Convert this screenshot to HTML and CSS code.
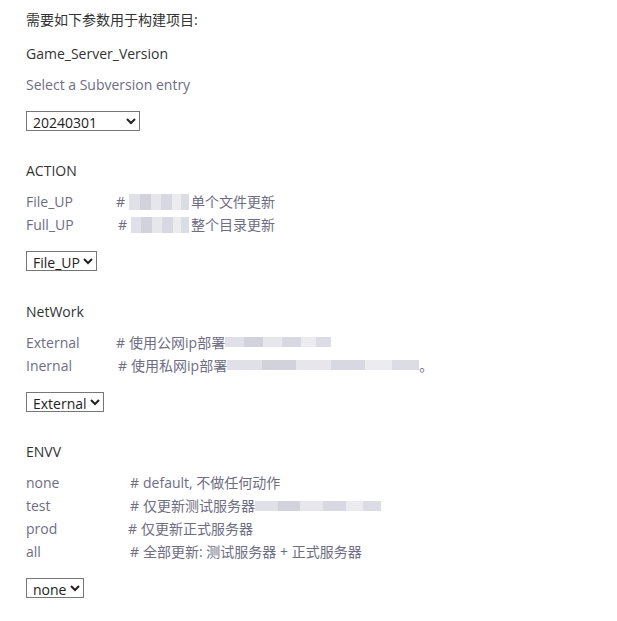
FILE: index.html
```html
<!DOCTYPE html>
<html lang="zh">
<head>
<meta charset="utf-8">
<title>Build</title>
<link rel="stylesheet" href="styles.css">
</head>
<body>
<div class="page">
  <div class="intro">需要如下参数用于构建项目:</div>

  <div class="section">
    <div class="name">Game_Server_Version</div>
    <div class="desc"><div class="line">Select a Subversion entry</div></div>
    <select class="sel sel-ver"><option>20240301</option></select>
  </div>

  <div class="section">
    <div class="name">ACTION</div>
    <div class="desc">
      <div class="line"><span class="key k90">File_UP</span><span class="hash">#</span><span class="blur b-file"></span><span>单个文件更新</span></div>
      <div class="line"><span class="key k92">Full_UP</span><span class="hash">#</span><span class="blur b-full"></span><span>整个目录更新</span></div>
    </div>
    <select class="sel"><option>File_UP</option></select>
  </div>

  <div class="section">
    <div class="name">NetWork</div>
    <div class="desc">
      <div class="line"><span class="key k90">External</span><span class="hash">#</span> 使用公网ip部署<span class="blur b-ext"></span></div>
      <div class="line"><span class="key k92">Inernal</span><span class="hash">#</span> 使用私网ip部署<span class="blur b-int"></span>。</div>
    </div>
    <select class="sel"><option>External</option></select>
  </div>

  <div class="section">
    <div class="name">ENVV</div>
    <div class="desc">
      <div class="line"><span class="key k104">none</span><span class="hash">#</span> default, 不做任何动作</div>
      <div class="line"><span class="key k104">test</span><span class="hash">#</span> 仅更新测试服务器<span class="blur b-test"></span></div>
      <div class="line"><span class="key k102">prod</span><span class="hash">#</span> 仅更新正式服务器</div>
      <div class="line"><span class="key k104">all</span><span class="hash">#</span> 全部更新: 测试服务器 + 正式服务器</div>
    </div>
    <select class="sel"><option>none</option></select>
  </div>
</div>
</body>
</html>
```

FILE: styles.css
```css
html, body {
  margin: 0;
  padding: 0;
  background: #ffffff;
}
body {
  font-family: "Open Sans", "Noto Sans CJK SC", sans-serif;
  font-size: 14px;
  color: #333333;
}
.page {
  padding: 8px 0 0 26px;
}
.intro {
  line-height: 23px;
  margin-bottom: 10.5px;
}
.name {
  line-height: 23px;
  margin-bottom: 8px;
}
.desc {
  color: #6e6d82;
  margin-bottom: 15px;
}
.line {
  line-height: 23px;
  white-space: nowrap;
  display: flex;
  align-items: center;
}
.key {
  display: inline-block;
  flex: none;
}
.k90 { width: 90px; }
.k92 { width: 92px; }
.k102 { width: 102px; }
.k104 { width: 104px; }
.hash {
  margin-right: 4px;
}
.section {
  margin-bottom: 28.5px;
}
.sel {
  display: block;
  box-sizing: border-box;
  height: 20px;
  font-family: "Open Sans", sans-serif;
  font-size: 14px;
  color: #222;
  border: 1px solid #767676;
  border-radius: 0;
  background: #fff;
  padding: 0 0 0 2px;
}
.sel-ver {
  width: 114px;
}
.blur {
  display: inline-block;
  height: 16px;
  flex: none;
  background:
    linear-gradient(90deg, #e0e0e8 0 18%, #d2d2dc 18% 36%, #e6e6ec 36% 54%, #d8d8e2 54% 72%, #ececf0 72% 86%, #dcdce4 86% 100%);
}
.b-file { width: 60px; margin-right: 2px; }
.b-full { width: 58px; margin-right: 2px; }
.b-ext { width: 106px; height: 10px; }
.b-int { width: 192px; height: 10px; }
.b-test { width: 126px; height: 10px; }
```
